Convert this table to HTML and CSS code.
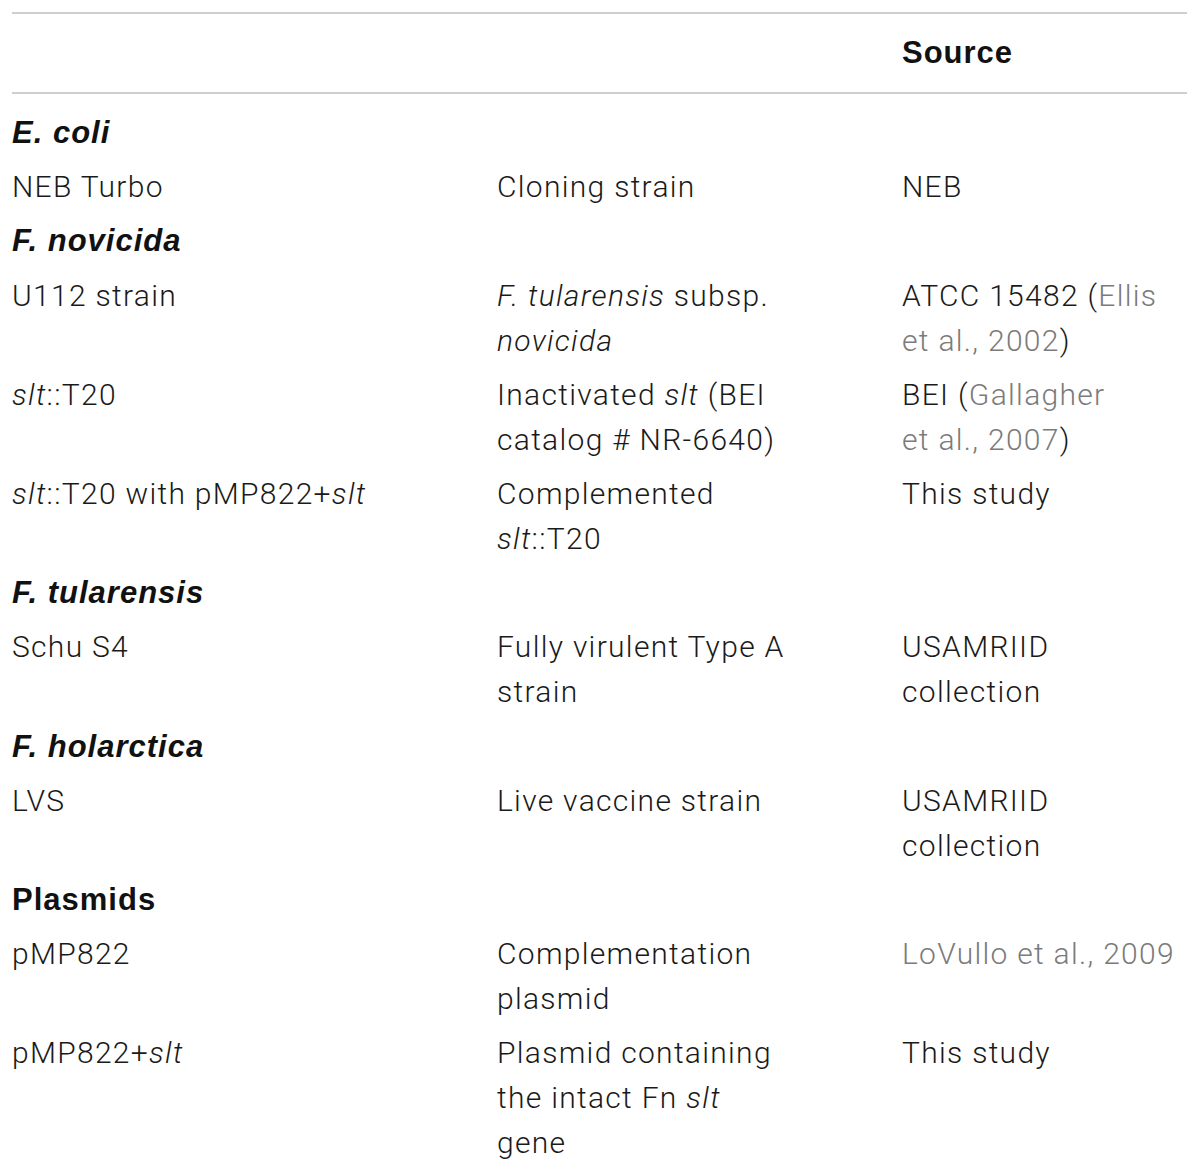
FILE: index.html
```html
<!DOCTYPE html>
<html lang="en">
<head>
<meta charset="utf-8">
<title>Strains and plasmids</title>
<link rel="stylesheet" href="styles.css">
</head>
<body>
<div class="wrap">
<table class="strains">
  <colgroup>
    <col class="c1">
    <col class="c2">
    <col class="c3">
  </colgroup>
  <thead>
    <tr><th></th><th></th><th>Source</th></tr>
  </thead>
  <tbody>
    <tr class="group first"><td colspan="3"><i>E. coli</i></td></tr>
    <tr><td>NEB Turbo</td><td>Cloning strain</td><td>NEB</td></tr>
    <tr class="group"><td colspan="3"><i>F. novicida</i></td></tr>
    <tr><td>U112 strain</td><td><i>F. tularensis</i> subsp.<br><i>novicida</i></td><td>ATCC 15482 (<span class="ref">Ellis<br>et al., 2002</span>)</td></tr>
    <tr><td><i>slt</i>::T20</td><td>Inactivated <i>slt</i> (BEI<br>catalog # NR-6640)</td><td>BEI (<span class="ref">Gallagher<br>et al., 2007</span>)</td></tr>
    <tr><td><i>slt</i>::T20 with pMP822+<i>slt</i></td><td>Complemented<br><i>slt</i>::T20</td><td>This study</td></tr>
    <tr class="group"><td colspan="3"><i>F. tularensis</i></td></tr>
    <tr><td>Schu S4</td><td>Fully virulent Type A<br>strain</td><td>USAMRIID<br>collection</td></tr>
    <tr class="group"><td colspan="3"><i>F. holarctica</i></td></tr>
    <tr><td>LVS</td><td>Live vaccine strain</td><td>USAMRIID<br>collection</td></tr>
    <tr class="group"><td colspan="3">Plasmids</td></tr>
    <tr><td>pMP822</td><td>Complementation<br>plasmid</td><td><span class="ref">LoVullo et al., 2009</span></td></tr>
    <tr><td>pMP822+<i>slt</i></td><td>Plasmid containing<br>the intact Fn <i>slt</i><br>gene</td><td>This study</td></tr>
  </tbody>
</table>
</div>
</body>
</html>
```
FILE: styles.css
```css
html, body {
  margin: 0;
  padding: 0;
  background: #ffffff;
}

.wrap {
  padding: 12px 13px 0 12px;
}

.strains {
  width: 1175px;
  border-collapse: collapse;
  table-layout: fixed;
  font-family: Roboto, "Liberation Sans", sans-serif;
  font-weight: 300;
  font-size: 30px;
  letter-spacing: 1.3px;
  line-height: 45px;
  color: #1a1a1a;
}

.c1 { width: 485px; }
.c2 { width: 405px; }
.c3 { width: 285px; }

.strains th {
  border-top: 2px solid #cfcfcf;
  border-bottom: 2px solid #cfcfcf;
  padding: 16px 0 17px;
  text-align: left;
  font-family: "Liberation Sans", Arial, sans-serif;
  font-weight: 700;
  font-size: 31px;
  letter-spacing: 1px;
  color: #111111;
}

.strains td {
  padding: 5px 0 4.2px;
  vertical-align: top;
  text-align: left;
  white-space: nowrap;
}

.strains .first td {
  padding-top: 16px;
}

.group td {
  font-family: "Liberation Sans", Arial, sans-serif;
  font-weight: 700;
  font-size: 31px;
  letter-spacing: 1px;
  color: #111111;
}

.ref {
  color: #7b7b7b;
}
```
